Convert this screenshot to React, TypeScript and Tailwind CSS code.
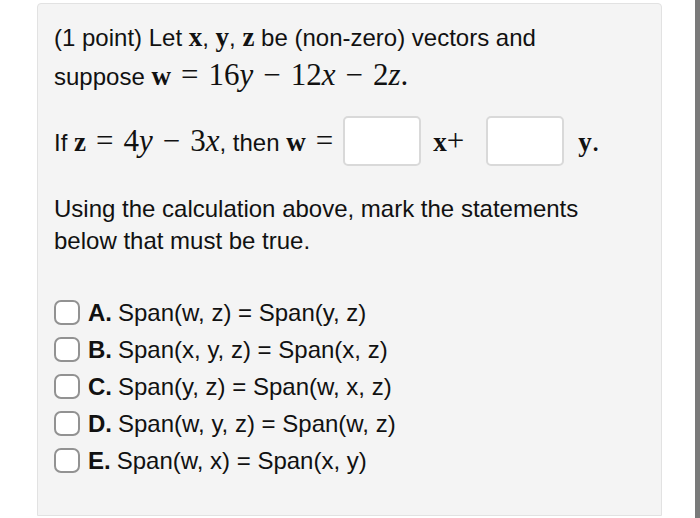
import React from "react";

function V({ children }: { children: React.ReactNode }) {
  // bold upright vector name
  return <span className="font-['Liberation_Serif',serif] text-[27px] font-bold">{children}</span>;
}

function M({ children }: { children: React.ReactNode }) {
  return <span className="font-['Liberation_Serif',serif] text-[31px]">{children}</span>;
}

function I({ children }: { children: React.ReactNode }) {
  return <i className="font-['Liberation_Serif',serif]">{children}</i>;
}

function Op({ children }: { children: React.ReactNode }) {
  return <span className="mx-[10px] font-['Liberation_Serif',serif]">{children}</span>;
}

function AnswerBox() {
  return (
    <span className="inline-block h-[50px] w-[78px] rounded-[5px] border-2 border-[#d9d9d9] bg-white align-middle" />
  );
}

const options = [
  { label: "A.", text: "Span(w, z) = Span(y, z)" },
  { label: "B.", text: "Span(x, y, z) = Span(x, z)" },
  { label: "C.", text: "Span(y, z) = Span(w, x, z)" },
  { label: "D.", text: "Span(w, y, z) = Span(w, z)" },
  { label: "E.", text: "Span(w, x) = Span(x, y)" },
];

export default function App() {
  return (
    <div className="flex h-[518px] w-[700px] overflow-hidden bg-white font-['Liberation_Sans',Arial,sans-serif] text-[24px] text-[#111]">
      <div className="ml-[37px] mt-[3px] h-[513px] w-[625px] rounded-t-[4px] border border-[#e2e2e2] bg-[#f4f4f4] pl-[16px] pr-[10px] pt-[15px]">
        <p className="leading-[37px]">
          (1 point) Let <V>x</V>, <V>y</V>, <V>z</V> be (non-zero) vectors and
          <br />
          suppose <V>w</V>
          <M>
            <Op>=</Op>16<I>y</I>
            <Op>−</Op>12<I>x</I>
            <Op>−</Op>2<I>z</I>.
          </M>
        </p>

        <div className="mt-[21px] flex h-[50px] items-center">
          <span>
            If <V>z</V>
            <M>
              <Op>=</Op>4<I>y</I>
              <Op>−</Op>3<I>x</I>
            </M>
            , then <V>w</V>
            <M>
              <Op>=</Op>
            </M>
          </span>
          <AnswerBox />
          <span className="ml-[12px] mr-[22px]">
            <V>x</V>
            <M>+</M>
          </span>
          <AnswerBox />
          <span className="ml-[14px]">
            <V>y</V>
            <M>.</M>
          </span>
        </div>

        <p className="mt-[27px] leading-[32px]">
          Using the calculation above, mark the statements
          <br />
          below that must be true.
        </p>

        <div className="mt-[37px] flex flex-col">
          {options.map((o) => (
            <label key={o.label} className="flex h-[37px] items-center">
              <span className="mr-[8px] inline-block h-[25px] w-[26px] rounded-[7px] border-2 border-[#929292] bg-white" />
              <span className="font-bold">{o.label}</span>
              <span className="ml-[6px]">{o.text}</span>
            </label>
          ))}
        </div>
      </div>
      <div className="flex-1" />
      <div className="h-full w-[5px] bg-[#7a7a7a]" />
    </div>
  );
}
